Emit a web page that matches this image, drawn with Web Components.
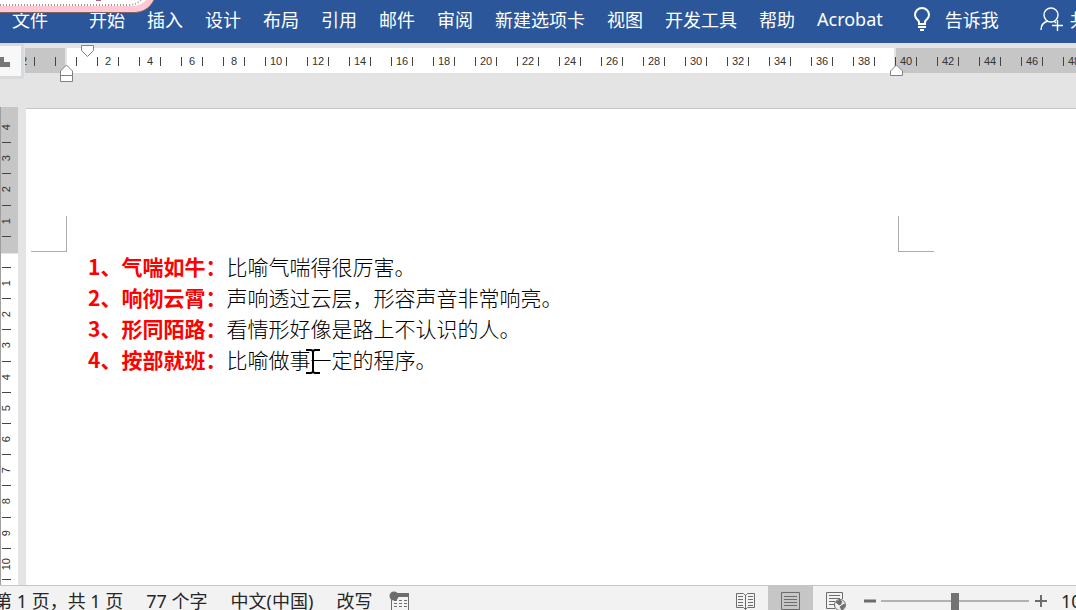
<!DOCTYPE html>
<html lang="zh-CN">
<head>
<meta charset="utf-8">
<title>Word</title>
<style>
    body {
        margin: 0;
        height: 100vh;
        overflow: hidden;
        font-family: "Noto Sans", "Noto Sans CJK SC", sans-serif;
        font-size: 18px;
        color: #262626;
    }
</style>
</head>
<body>
<word-app></word-app>

<script>
class RibbonTabs extends HTMLElement {
    constructor() {
        super();
        this.attachShadow({ mode: "open" });
    }

    connectedCallback() {
        const tabs = ["开始", "插入", "设计", "布局", "引用", "邮件", "审阅", "新建选项卡", "视图", "开发工具", "帮助", "Acrobat"];
        this.shadowRoot.innerHTML = `
            <style>
                :host {
                    display: flex;
                    height: 43px;
                    flex: none;
                    background: #2b579a;
                    color: white;
                    overflow: hidden;
                }
                button {
                    display: flex;
                    align-items: center;
                    gap: 14px;
                    flex: none;
                    height: 38px;
                    padding: 0;
                    border: 0;
                    background: none;
                    color: inherit;
                    font: inherit;
                    white-space: nowrap;
                    cursor: pointer;
                }
                .file {
                    margin: 0 41px 0 12px;
                }
                nav {
                    display: flex;
                    gap: 22px;
                }
                .tell {
                    margin-left: 30px;
                }
                .share {
                    margin-left: 41px;
                    gap: 6px;
                }
                svg {
                    fill: none;
                    stroke: white;
                }
            </style>
            <button class="file">文件</button>
            <nav>${tabs.map(t => `<button>${t}</button>`).join("")}</nav>
            <button class="tell">
                <svg width="18" height="24" viewBox="0 0 18 24" stroke-width="2">
                    <path d="M6 17v-2c0-2-4-3-4-7a7 7 0 0 1 14 0c0 4-4 5-4 7v2zM5 20h8M7 23h4"/>
                </svg>告诉我
            </button>
            <button class="share">
                <svg width="24" height="24" viewBox="0 0 24 24" stroke-width="1.4">
                    <circle cx="11" cy="8" r="7"/>
                    <path d="M1 23c0-5 3-8 7-9M14 14l2 2M17.500 13v11M12 18.500h11"/>
                </svg>共享
            </button>
        `;
    }
}

class RulerHorizontal extends HTMLElement {
    constructor() {
        super();
        this.attachShadow({ mode: "open" });
    }

    connectedCallback() {
        let cells = "";
        for (let n = -2; n <= 50; n += 2) {
            cells += `<div class="cell"><span>${n === 0 ? "" : Math.abs(n)}</span></div>`;
        }
        this.shadowRoot.innerHTML = `
            <style>
                :host {
                    display: flex;
                    position: relative;
                    flex: none;
                    align-items: flex-start;
                    height: 64px;
                    background: #e4e4e4;
                }
                button {
                    display: flex;
                    align-items: center;
                    flex: none;
                    width: 24px;
                    height: 36px;
                    padding: 0;
                    border: 3px solid #d8dadc;
                    border-left: 0;
                    background: #f8f8f8;
                    margin-right: 1px;
                }
                .strip {
                    display: flex;
                    flex: 1;
                    min-width: 0;
                    box-sizing: border-box;
                    height: 25px;
                    margin-top: 5px;
                    padding-top: 9px;
                    overflow: hidden;
                    background: linear-gradient(to right, #c6c6c6 40px, #e4e4e4 40px 42px, white 42px 869px, #e4e4e4 869px 871px, #c6c6c6 871px);
                }
                .cell {
                    display: flex;
                    flex: none;
                    justify-content: center;
                    width: 42px;
                }
                .cell:first-child {
                    margin-left: -22px;
                }
                span {
                    width: 20px;
                    height: 9px;
                    border: 1px solid #444;
                    border-width: 0 1px;
                    font: 11px/9px "Liberation Sans", sans-serif;
                    text-align: center;
                    color: #333;
                }
                /* indent markers sit over the strip */
                .marker {
                    position: absolute;
                    fill: white;
                    stroke: #808080;
                }
            </style>
            <button aria-label="制表符"><svg width="12" height="12"><path d="M0 2h4v5h6v5H0z" fill="#777"/></svg></button>
            <div class="strip">${cells}</div>
            <svg class="marker" style="left:81px;top:2px" width="13" height="12"><path d="M.5.500h12v5l-6 6-6-6z"/></svg>
            <svg class="marker" style="left:60px;top:21px" width="13" height="18"><path d="M.5 17.500V7l6-6 6 6v10.500zM.5 11.500h12"/></svg>
            <svg class="marker" style="left:890px;top:21px" width="13" height="12"><path d="M.5 11.500V7l6-6 6 6v4.500z"/></svg>
        `;
    }
}

class RulerVertical extends HTMLElement {
    constructor() {
        super();
        this.attachShadow({ mode: "open" });
    }

    connectedCallback() {
        const groups = [[4, 3, 2, 1, ""], [1, 2, 3, 4, 5], [6, 7, 8, 9, 10], [11, 12, 13, 14, 15]];
        this.shadowRoot.innerHTML = `
            <style>
                :host {
                    display: block;
                    box-sizing: border-box;
                    flex: none;
                    width: 18px;
                    padding-top: 5px;
                    overflow: hidden;
                    border-left: 1px solid #a0a0a0;
                    background: linear-gradient(#c6c6c6 146px, #e4e4e4 146px 147px, white 147px);
                }
                .group {
                    display: flex;
                    flex-direction: column;
                    height: 156px;
                }
                .cell {
                    display: flex;
                    flex: 1;
                    align-items: center;
                    justify-content: center;
                    width: 9px;
                    margin-left: 1px;
                    border-bottom: 1px solid #444;
                }
                span {
                    writing-mode: vertical-rl;
                    transform: rotate(180deg);
                    font: 11px/11px "Liberation Sans", sans-serif;
                    color: #333;
                }
            </style>
            ${groups.map(g => `<div class="group">${g.map(n => `<div class="cell"><span>${n}</span></div>`).join("")}</div>`).join("")}
        `;
    }
}

class DocPage extends HTMLElement {
    constructor() {
        super();
        this.attachShadow({ mode: "open" });
    }

    connectedCallback() {
        this.shadowRoot.innerHTML = `
            <style>
                :host {
                    display: block;
                    flex: 1;
                    margin: 1px 0 0 8px;
                    padding: 107px 0 0 5px;
                    border-top: 1px solid #c6c6c6;
                    background: white;
                }
                .marks {
                    display: flex;
                    justify-content: space-between;
                    max-width: 903px;
                }
                .marks i {
                    box-sizing: border-box;
                    width: 36px;
                    height: 36px;
                    border: 0 solid #ababab;
                    border-width: 0 1px 1px 0;
                }
                .marks i + i {
                    border-width: 0 0 1px 1px;
                }
                .text {
                    margin-top: -1px;
                    padding-left: 57px;
                }
            </style>
            <div class="marks"><i></i><i></i></div>
            <div class="text"><slot></slot></div>
        `;
    }
}

class DocLine extends HTMLElement {
    constructor() {
        super();
        this.attachShadow({ mode: "open" });
    }

    connectedCallback() {
        this.shadowRoot.innerHTML = `
            <style>
                :host {
                    display: block;
                    font: 300 21px/31px "Noto Sans CJK SC", sans-serif;
                    color: black;
                    white-space: nowrap;
                }
                b {
                    font-weight: 700;
                    color: red;
                }
            </style>
            <b><slot name="term"></slot></b><slot></slot>
        `;
    }
}

class StatusBar extends HTMLElement {
    constructor() {
        super();
        this.attachShadow({ mode: "open" });
    }

    connectedCallback() {
        this.shadowRoot.innerHTML = `
            <style>
                :host {
                    display: flex;
                    flex: none;
                    justify-content: space-between;
                    height: 24px;
                    overflow: hidden;
                    border-top: 1px solid #c6c6c6;
                    background: #f2f2f2;
                }
                div {
                    display: flex;
                    flex: none;
                    align-items: center;
                    height: 30px;
                }
                .info {
                    gap: 23px;
                    height: 28px;
                    margin-left: -6px;
                    white-space: nowrap;
                }
                .info svg {
                    margin: 2px 0 0 -6px;
                }
                .view {
                    margin-right: -31px;
                }
                button {
                    display: flex;
                    align-items: center;
                    justify-content: center;
                    width: 45px;
                    height: 30px;
                    padding: 0;
                    border: 0;
                    background: none;
                    color: inherit;
                    font: inherit;
                }
                .on {
                    background: #c6c6c6;
                }
                .step {
                    width: 12px;
                }
                svg {
                    fill: none;
                    stroke: #6d6d6d;
                }
                input {
                    appearance: none;
                    width: 148px;
                    height: 18px;
                    margin: 0 6px 0 5px;
                    background: linear-gradient(#b1b1b1, #b1b1b1) center / 100% 2px no-repeat;
                }
                input::-webkit-slider-thumb {
                    appearance: none;
                    width: 8px;
                    height: 17px;
                    background: #737373;
                }
                .zoom {
                    width: 46px;
                    margin-left: 14px;
                }
            </style>
            <div class="info">
                <span>第 1 页，共 1 页</span>
                <span>77 个字</span>
                <span>中文(中国)</span>
                <span>改写</span>
                <svg width="21" height="20" viewBox="0 0 21 20">
                    <path d="M2.500 9v10.500h17V2M5 9.500h3m2 0h3m2 0h3M5 12.500h3m2 0h3m2 0h3M5 15.500h3m2 0h3m2 0h3"/>
                    <path d="M8 2h12v4H8z" fill="#6d6d6d" stroke="none"/>
                    <circle cx="5" cy="5" r="4.500" fill="#6d6d6d" stroke="none"/>
                </svg>
            </div>
            <div class="view">
                <button aria-label="阅读视图"><svg width="20" height="19" viewBox="0 0 20 19">
                    <path d="M9.500 3.500l-2-2h-7v14h7l2 2 2-2h7v-14h-7zM9.500 3v15M2 4.500h5M2 7.500h5M2 10.500h5M2 13.500h5M12 4.500h5M12 7.500h5M12 10.500h5M12 13.500h5"/>
                </svg></button>
                <button class="on" aria-label="页面视图"><svg width="19" height="18" viewBox="0 0 19 18">
                    <path d="M.5.500h18v17H.5zM3 4.500h13M3 7.500h13M3 10.500h13M3 13.500h13"/>
                </svg></button>
                <button aria-label="Web 版式视图"><svg width="20" height="20" viewBox="0 0 20 20">
                    <path d="M9 17.500H.5V1.500h16V8M3 4.500h11M3 7.500h11M3 10.500h6M3 13.500h5"/>
                    <circle cx="14" cy="14" r="5.500"/>
                    <path d="M10 11l4-2 2 2-2 3-2-1zM14 16l4-3 1 2-3 4z" fill="#6d6d6d"/>
                </svg></button>
                <button class="step" style="margin-left:6px" aria-label="缩小"><svg width="12" height="12"><path d="M0 6h12" stroke-width="3"/></svg></button>
                <input type="range" min="0" max="100" value="50" aria-label="显示比例">
                <button class="step" aria-label="放大"><svg width="12" height="12"><path d="M0 6h12M6 0v12" stroke-width="2"/></svg></button>
                <span class="zoom">100%</span>
            </div>
        `;
    }
}

class WordApp extends HTMLElement {
    constructor() {
        super();
        this.attachShadow({ mode: "open" });
    }

    connectedCallback() {
        this.shadowRoot.innerHTML = `
            <style>
                :host {
                    display: flex;
                    flex-direction: column;
                    height: 100vh;
                    overflow: hidden;
                    background: #e4e4e4;
                }
                main {
                    display: flex;
                    flex: 1;
                    min-height: 0;
                    overflow: hidden;
                }
                /* corner of a floating panel, over the ribbon */
                .panel {
                    position: absolute;
                    left: 0;
                    top: 0;
                }
                /* text cursor of the mouse, over the page */
                .pointer {
                    position: absolute;
                    left: 306px;
                    top: 349px;
                }
            </style>
            <ribbon-tabs></ribbon-tabs>
            <ruler-horizontal></ruler-horizontal>
            <main>
                <ruler-vertical></ruler-vertical>
                <doc-page>
                    <doc-line><span slot="term">1、气喘如牛：</span>比喻气喘得很厉害。</doc-line>
                    <doc-line><span slot="term">2、响彻云霄：</span>声响透过云层，形容声音非常响亮。</doc-line>
                    <doc-line><span slot="term">3、形同陌路：</span>看情形好像是路上不认识的人。</doc-line>
                    <doc-line><span slot="term">4、按部就班：</span>比喻做事一定的程序。</doc-line>
                </doc-page>
            </main>
            <status-bar></status-bar>
            <svg class="panel" width="160" height="14" viewBox="0 0 160 14">
                <path d="M0 0h154c-4 8-11 12.500-20 12.500H0z" fill="#ffc8d2"/>
                <path d="M154 0c-4 8-11 12.500-20 12.500H0" fill="none" stroke="#806468"/>
                <path d="M0 0h146c-4 4-8 6-14 6H0z" fill="white"/>
                <path d="M0 5h128c6 0 10-2 13-5" fill="none" stroke="#999" stroke-width="2" stroke-dasharray="1 2"/>
                <path d="M96 0h5" stroke="#a06080" stroke-width="2"/>
            </svg>
            <svg class="pointer" width="15" height="26" viewBox="0 0 15 26">
                <path d="M0 1h5l2 1 2-1h5M7 1v23M0 24h5l2-1 2 1h5" fill="none" stroke="black" stroke-width="2"/>
            </svg>
        `;
    }
}

customElements.define("ribbon-tabs", RibbonTabs);
customElements.define("ruler-horizontal", RulerHorizontal);
customElements.define("ruler-vertical", RulerVertical);
customElements.define("doc-page", DocPage);
customElements.define("doc-line", DocLine);
customElements.define("status-bar", StatusBar);
customElements.define("word-app", WordApp);
</script>
</body>
</html>
